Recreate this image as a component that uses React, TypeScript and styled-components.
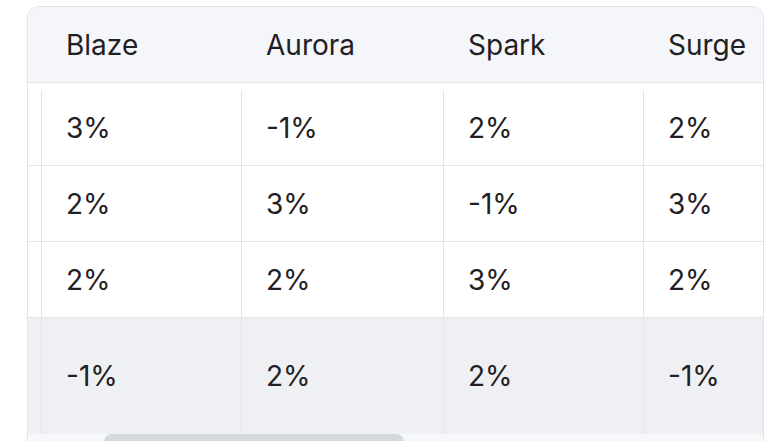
import React from "react";
import styled, { createGlobalStyle } from "styled-components";

const Global = createGlobalStyle`
  html, body { margin: 0; padding: 0; background: #ffffff; }
  body { font-family: Inter, Roboto, "Liberation Sans", sans-serif; color: #1f2023; }
`;

const Page = styled.div`
  width: 768px;
  height: 441px;
  overflow: hidden;
  padding: 6px 4px 0 27px;
  box-sizing: border-box;
`;

const Card = styled.div`
  border: 1px solid #e1e3e8;
  border-bottom: none;
  border-radius: 12px 12px 0 0;
  overflow: hidden;
  background: #ffffff;
`;

const cols = "13px 200px 202px 200px 1fr";

const HeaderRow = styled.div`
  display: grid;
  grid-template-columns: ${cols};
  height: 75px;
  background: #f5f6fa;
  border-bottom: 1px solid #e3e5ea;
`;

const HeadCell = styled.div`
  display: flex;
  align-items: center;
  padding-left: 25px;
  font-size: 28px;
  font-weight: 400;
  color: #1f2023;
`;

const Spacer = styled.div`
  height: 7px;
`;

const Row = styled.div<{ $h: number; $shade?: boolean; $last?: boolean }>`
  display: grid;
  grid-template-columns: ${cols};
  height: ${(p) => p.$h}px;
  background: ${(p) => (p.$shade ? "#eff0f4" : "#ffffff")};
  border-bottom: ${(p) => (p.$last ? "none" : "1px solid #e3e5ea")};
  box-sizing: border-box;
`;

const Edge = styled.div``;

const Cell = styled.div`
  display: flex;
  align-items: center;
  padding-left: 24px;
  border-left: 1px solid #e3e5ea;
  font-size: 28px;
  color: #1f2023;
`;

const Track = styled.div`
  height: 12px;
  background: #f7f8fa;
  position: relative;
`;

const Thumb = styled.div`
  position: absolute;
  top: 0;
  left: 76px;
  width: 300px;
  height: 16px;
  border-radius: 8px;
  background: #d4d8df;
`;

const heads = ["Blaze", "Aurora", "Spark", "Surge"];
const rows = [
  { h: 76, v: ["3%", "-1%", "2%", "2%"] },
  { h: 76, v: ["2%", "3%", "-1%", "3%"] },
  { h: 76, v: ["2%", "2%", "3%", "2%"] },
  { h: 116, v: ["-1%", "2%", "2%", "-1%"], shade: true, last: true },
];

export default function App() {
  return (
    <>
      <Global />
      <Page>
        <Card>
          <HeaderRow>
            <Edge />
            {heads.map((h) => (
              <HeadCell key={h}>{h}</HeadCell>
            ))}
          </HeaderRow>
          <Spacer />
          {rows.map((r, i) => (
            <Row key={i} $h={r.h} $shade={r.shade} $last={r.last}>
              <Edge />
              {r.v.map((v, j) => (
                <Cell key={j}>{v}</Cell>
              ))}
            </Row>
          ))}
          <Track>
            <Thumb />
          </Track>
        </Card>
      </Page>
    </>
  );
}
